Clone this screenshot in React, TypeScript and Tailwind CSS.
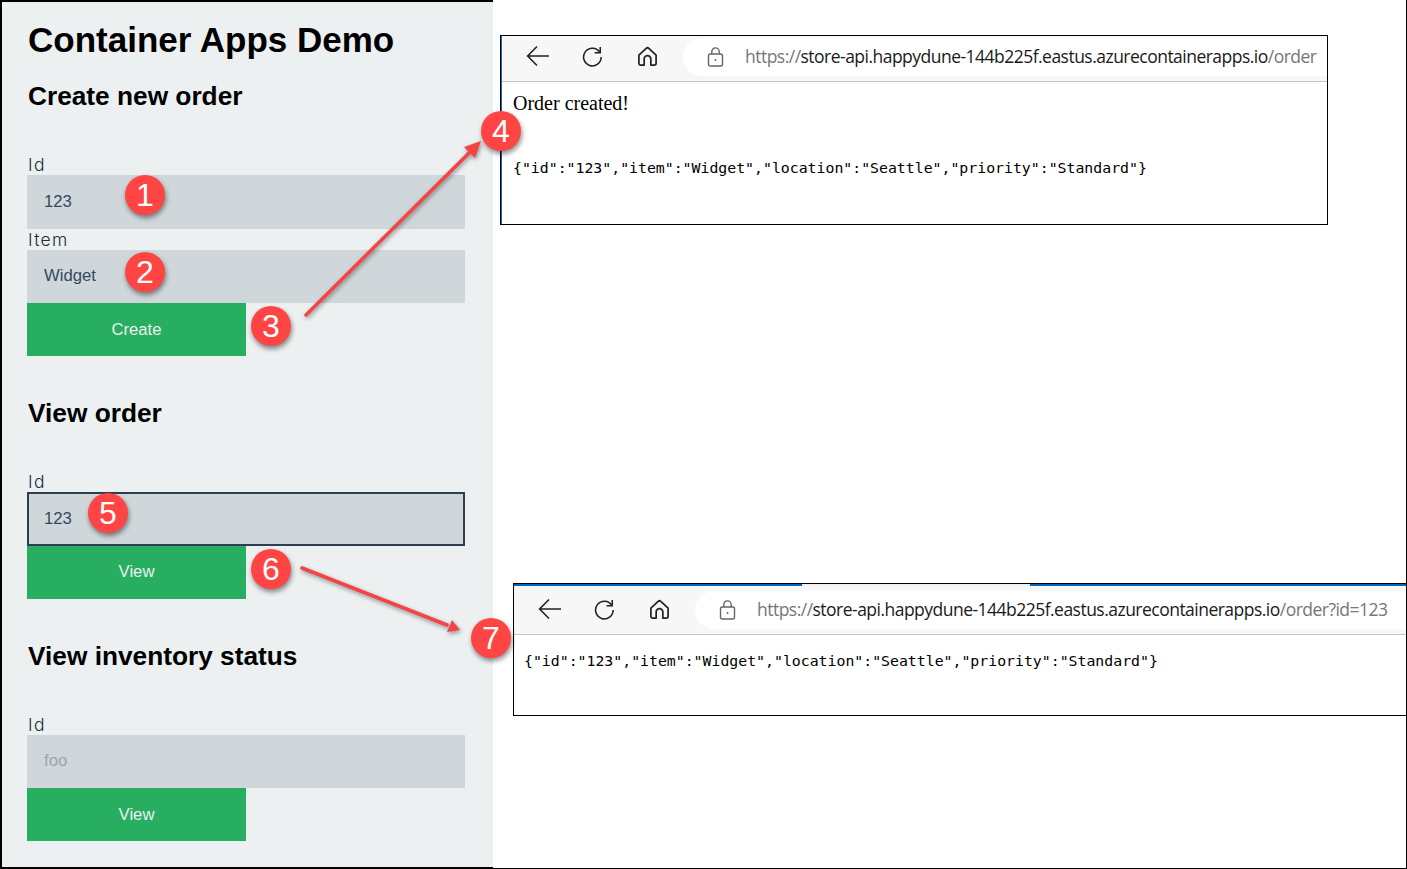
import type { ReactNode } from 'react'

function Field({ label, value, placeholder, focused }: { label: string; value?: string; placeholder?: string; focused?: boolean }) {
  return (
    <div>
      <label className="ml-px block h-[21px] font-['Inter',sans-serif] text-[17.5px] leading-[21px] font-light tracking-[1.3px] text-[#1c2c3c]">{label}</label>
      <input
        readOnly
        value={value}
        placeholder={placeholder}
        className={
          focused
            ? "block h-[53.5px] w-[438px] border-2 border-[#2c3e50] bg-[#d0d7da] pl-[15px] font-['Liberation_Sans',sans-serif] text-[16.7px] text-[#34495e] outline-none"
            : "block h-[53.5px] w-[438px] bg-[#d0d7da] pl-[17px] font-['Liberation_Sans',sans-serif] text-[16.7px] text-[#34495e] outline-none placeholder:text-[#98a6ad]"
        }
      />
    </div>
  )
}

function GreenButton({ children }: { children: ReactNode }) {
  return (
    <button className="block h-[53px] w-[219px] bg-[#27ae60] font-['Liberation_Sans',sans-serif] text-[16.7px] text-[#ecf0f1]">
      {children}
    </button>
  )
}

function SectionTitle({ children }: { children: ReactNode }) {
  return <h2 className="mb-[42px] ml-px h-[32px] font-['Liberation_Sans',sans-serif] text-[26.25px] leading-[32px] font-bold text-black">{children}</h2>
}

function Badge({ n, className }: { n: number; className: string }) {
  return (
    <div className={`absolute flex h-[40px] w-[40px] items-center justify-center rounded-full bg-[#ff4444] font-['Liberation_Sans',sans-serif] text-[32px] leading-none text-white shadow-[1px_3px_5px_rgba(0,0,0,0.45)] ${className}`}>
      {n}
    </div>
  )
}

function BrowserIcons() {
  return (
    <div className="flex h-[38px] w-[181px] shrink-0 items-center pb-[2px]">
      <svg className="ml-[24px] shrink-0" width="24" height="22" viewBox="0 0 24 22" fill="none" stroke="#222" strokeWidth="1.6">
        <path d="M23 11H2M11 1.5 1.6 11l9.4 9.5" />
      </svg>
      <svg className="ml-[31px] shrink-0" width="22" height="22" viewBox="0 0 24 24" fill="none" stroke="#222" strokeWidth="1.7">
        <path d="M20.5 8A9.6 9.6 0 1 0 22 13" />
        <path d="M21 2.2V8.4h-6.2" />
      </svg>
      <svg className="ml-[34px] shrink-0" width="21" height="21" viewBox="0 0 22 22" fill="none" stroke="#222" strokeWidth="1.8" strokeLinejoin="round">
        <path d="M2 9.5 9.6 2.5a2 2 0 0 1 2.8 0L20 9.5V18a2 2 0 0 1-2 2h-3.5v-6.5a3.5 3.5 0 0 0-7 0V20H4a2 2 0 0 1-2-2z" />
      </svg>
    </div>
  )
}

function AddressBar({ path }: { path: string }) {
  return (
    <div className="flex h-[38px] min-w-0 flex-1 items-center rounded-l-[19px] bg-white pl-[24px]">
      <svg className="shrink-0" width="17" height="20" viewBox="0 0 17 20" fill="none" stroke="#666" strokeWidth="1.4">
        <rect x="1.5" y="7" width="14" height="12" rx="1.8" />
        <path d="M4.8 7V4.6a3.7 3.7 0 0 1 7.4 0V7" />
        <circle cx="8.5" cy="13" r="1" fill="#666" stroke="none" />
      </svg>
      <span className="ml-[21px] pb-[2px] font-['Open_Sans',sans-serif] text-[17.5px] tracking-[-0.52px] whitespace-nowrap text-[#767676]">
        https://<span className="text-[#1a1a1a]">store-api.happydune-144b225f.eastus.azurecontainerapps.io</span>
        {path}
      </span>
    </div>
  )
}

const orderJson = '{"id":"123","item":"Widget","location":"Seattle","priority":"Standard"}'

export default function App() {
  return (
    <div className="relative flex h-[869px] w-[1407px] overflow-hidden bg-white">
      <aside className="h-[869px] w-[493px] shrink-0 border-y-2 border-l-2 border-black bg-[#ecf0f1] pl-[25px]">
        <h1 className="mt-[17px] mb-[19px] ml-px h-[42px] font-['Liberation_Sans',sans-serif] text-[35px] leading-[42px] font-bold text-black">
          Container Apps Demo
        </h1>
        <SectionTitle>Create new order</SectionTitle>
        <Field label="Id" value="123" />
        <Field label="Item" value="Widget" />
        <GreenButton>Create</GreenButton>

        <div className="mt-[41px]">
          <SectionTitle>View order</SectionTitle>
          <Field label="Id" value="123" focused />
          <GreenButton>View</GreenButton>
        </div>

        <div className="mt-[41px]">
          <SectionTitle>View inventory status</SectionTitle>
          <Field label="Id" placeholder="foo" />
          <GreenButton>View</GreenButton>
        </div>
      </aside>

      <main className="h-[869px] flex-1 border-r border-b border-black">
        <section className="mt-[35px] ml-[7px] h-[190px] w-[828px] border border-black">
          <div className="flex h-full flex-col border-l border-[#0b6cb8]">
            <div className="flex h-[46px] shrink-0 items-start border-b border-[#c4c4c4] bg-[#f7f7f7] pt-[2px]">
              <BrowserIcons />
              <AddressBar path="/order" />
            </div>
            <p className="mt-[8px] ml-[11px] font-['Liberation_Serif',serif] text-[20px] leading-[26px] text-black">Order created!</p>
            <pre className="mt-[42px] ml-[11px] font-['DejaVu_Sans_Mono',monospace] text-[14.83px] leading-[20px] text-black">{orderJson}</pre>
          </div>
        </section>

        <section className="mt-[358px] ml-[20px] flex h-[133px] w-[893px] flex-col border border-r-0 border-black">
          <div className="flex h-[2px] shrink-0 bg-[#0067c0]">
            <div className="ml-[288px] h-[2px] w-[228px] bg-[#f0f0f0]" />
          </div>
          <div className="flex h-[49px] shrink-0 items-start border-b border-[#c4c4c4] bg-[#f7f7f7] pt-[5px]">
            <BrowserIcons />
            <AddressBar path="/order?id=123" />
          </div>
          <pre className="mt-[16px] ml-[10px] font-['DejaVu_Sans_Mono',monospace] text-[14.83px] leading-[20px] text-black">{orderJson}</pre>
        </section>
      </main>

      <svg className="pointer-events-none absolute top-0 left-0 drop-shadow-[1px_2px_2px_rgba(0,0,0,0.4)]" width="1407" height="869" fill="#f44444" stroke="none">
        <path d="M306 315 471 151" stroke="#f44444" strokeWidth="3.5" strokeLinecap="round" />
        <polygon points="481,141 475,158 464,147" />
        <path d="M302 568 447 625" stroke="#f44444" strokeWidth="3.5" strokeLinecap="round" />
        <polygon points="460,630 447,632 452,620" />
      </svg>

      <Badge n={1} className="top-[175px] left-[125px]" />
      <Badge n={2} className="top-[252px] left-[125px]" />
      <Badge n={3} className="top-[306px] left-[251px]" />
      <Badge n={4} className="top-[111px] left-[481px]" />
      <Badge n={5} className="top-[493px] left-[88px]" />
      <Badge n={6} className="top-[549px] left-[251px]" />
      <Badge n={7} className="top-[618px] left-[471px]" />
    </div>
  )
}
